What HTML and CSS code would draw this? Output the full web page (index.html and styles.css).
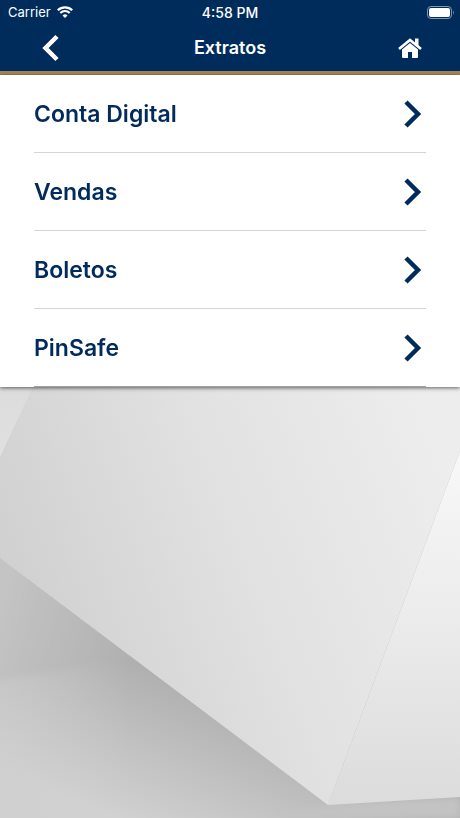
FILE: index.html
```html
<!DOCTYPE html>
<html lang="pt-BR">
<head>
    <meta charset="UTF-8">
    <meta name="viewport" content="width=device-width, initial-scale=1.0">
    <title>Extratos</title>
    <link rel="stylesheet" href="styles.css">
</head>
<body>
    <svg class="backdrop" viewBox="0 0 460 818" preserveAspectRatio="xMidYMax slice" aria-hidden="true">
        <defs>
            <linearGradient id="floor" gradientUnits="userSpaceOnUse" x1="170" y1="670" x2="110" y2="815">
                <stop offset="0" stop-color="#aeaeae"/>
                <stop offset="0.5" stop-color="#c0c0c0"/>
                <stop offset="1" stop-color="#d1d1d1"/>
            </linearGradient>
            <linearGradient id="floor-light" gradientUnits="userSpaceOnUse" x1="0" y1="0" x2="130" y2="0">
                <stop offset="0" stop-color="#cfcfcf" stop-opacity="0.5"/>
                <stop offset="1" stop-color="#cfcfcf" stop-opacity="0"/>
            </linearGradient>
            <linearGradient id="wall" gradientUnits="userSpaceOnUse" x1="0" y1="600" x2="130" y2="640">
                <stop offset="0" stop-color="#c4c4c4"/>
                <stop offset="1" stop-color="#b1b1b1"/>
            </linearGradient>
            <linearGradient id="front" gradientUnits="userSpaceOnUse" x1="0" y1="560" x2="420" y2="400">
                <stop offset="0" stop-color="#d0d0d0"/>
                <stop offset="0.5" stop-color="#e1e1e1"/>
                <stop offset="1" stop-color="#ededed"/>
            </linearGradient>
            <linearGradient id="side" gradientUnits="userSpaceOnUse" x1="0" y1="450" x2="0" y2="800">
                <stop offset="0" stop-color="#f8f8f8"/>
                <stop offset="0.5" stop-color="#ebebeb"/>
                <stop offset="1" stop-color="#dcdcdc"/>
            </linearGradient>
            <linearGradient id="corner" gradientUnits="userSpaceOnUse" x1="0" y1="380" x2="0" y2="457">
                <stop offset="0" stop-color="#dcdcdc"/>
                <stop offset="1" stop-color="#e0e0e0"/>
            </linearGradient>
            <filter id="soft" x="-20%" y="-20%" width="140%" height="140%">
                <feGaussianBlur stdDeviation="3"/>
            </filter>
        </defs>
        <rect width="460" height="818" fill="url(#floor)"/>
        <rect y="540" width="180" height="278" fill="url(#floor-light)"/>
        <polygon points="-20,530 150,640 150,652 60,670 -20,684" fill="url(#wall)" filter="url(#soft)"/>
        <polygon points="328,805 460,797 460,818 280,818" fill="#c3c3c3" filter="url(#soft)"/>
        <polygon points="0,0 460,0 460,451 328,805 0,558" fill="url(#front)"/>
        <polygon points="460,451 460,797 328,805" fill="url(#side)"/>
        <polygon points="0,380 36,380 0,457" fill="url(#corner)"/>
    </svg>

    <header>
        <div class="status-bar">
            <div class="carrier">
                <span>Carrier</span>
                <svg class="wifi" viewBox="0 0 16 12" aria-hidden="true">
                    <path d="M0.8 4.3 A10.2 10.2 0 0 1 15.2 4.3" fill="none" stroke="#fff" stroke-width="2.3"/>
                    <path d="M3.3 7 A6.6 6.6 0 0 1 12.7 7" fill="none" stroke="#fff" stroke-width="2.1"/>
                    <path d="M8 12 L5.5 9.4 A3.6 3.6 0 0 1 10.5 9.4 Z" fill="#fff"/>
                </svg>
            </div>
            <time datetime="16:58">4:58 PM</time>
            <div class="battery">
                <svg viewBox="0 0 27 13" aria-hidden="true">
                    <rect x="0.5" y="0.5" width="24" height="12" rx="3.5" fill="none" stroke="#8296ae"/>
                    <rect x="2" y="2" width="21" height="9" rx="2" fill="#fff"/>
                    <path d="M26 4.5 Q27.5 6.5 26 8.5 Z" fill="#8296ae"/>
                </svg>
            </div>
        </div>
        <nav>
            <a class="back" href="#" aria-label="Voltar">
                <svg viewBox="0 0 18 28" aria-hidden="true">
                    <path d="M15 2.5 L3.5 14 L15 25.5" fill="none" stroke="#fff" stroke-width="4.5"/>
                </svg>
            </a>
            <h1>Extratos</h1>
            <a class="home" href="#" aria-label="Início">
                <svg viewBox="0 0 24 20" aria-hidden="true">
                    <path d="M1 11 L12 1.9 L23 11" fill="none" stroke="#fff" stroke-width="2.6"/>
                    <path d="M17 0.5 H20.5 V9 L17 6 Z" fill="#fff"/>
                    <path d="M12 5 L20 11.6 V19 Q20 20 19 20 H14 V14 H10 V20 H5 Q4 20 4 19 V11.6 Z" fill="#fff"/>
                </svg>
            </a>
        </nav>
    </header>

    <main>
        <ul class="menu">
            <li>
                <a href="#">
                    <span>Conta Digital</span>
                    <svg class="chevron" viewBox="0 0 18 28" aria-hidden="true"><path d="M2 2 L14 14 L2 26"/></svg>
                </a>
            </li>
            <li>
                <a href="#">
                    <span>Vendas</span>
                    <svg class="chevron" viewBox="0 0 18 28" aria-hidden="true"><path d="M2 2 L14 14 L2 26"/></svg>
                </a>
            </li>
            <li>
                <a href="#">
                    <span>Boletos</span>
                    <svg class="chevron" viewBox="0 0 18 28" aria-hidden="true"><path d="M2 2 L14 14 L2 26"/></svg>
                </a>
            </li>
            <li>
                <a href="#">
                    <span>PinSafe</span>
                    <svg class="chevron" viewBox="0 0 18 28" aria-hidden="true"><path d="M2 2 L14 14 L2 26"/></svg>
                </a>
            </li>
        </ul>
    </main>
</body>
</html>
```
FILE: styles.css
```css
* {
    box-sizing: border-box;
}

body {
    font-family: Inter, 'Liberation Sans', sans-serif;
    margin: 0;
    min-height: 100vh;
    background-color: #d8d8d8;
    color: #002b5c;
}

.backdrop {
    position: fixed;
    inset: 0;
    width: 100%;
    height: 100%;
    z-index: -1;
}

header {
    background-color: #002c5b;
    border-bottom: 4px solid #a98354;
    color: white;
}

.status-bar {
    display: grid;
    grid-template-columns: 1fr auto 1fr;
    align-items: center;
    height: 24px;
    padding: 0 6px;
    font-size: 13px;
}

.status-bar time {
    font-size: 14px;
    font-weight: 500;
}

.carrier {
    display: flex;
    align-items: center;
    gap: 6px;
    padding-left: 2px;
}

.wifi {
    width: 16px;
    height: 12px;
}

.battery {
    display: flex;
    justify-content: flex-end;
}

.battery svg {
    width: 27px;
    height: 13px;
}

nav {
    display: grid;
    grid-template-columns: 1fr auto 1fr;
    align-items: center;
    height: 47px;
    padding: 0 38px;
}

nav a {
    display: flex;
}

nav h1 {
    margin: 0;
    font-size: 18px;
    font-weight: 600;
}

.back {
    padding-left: 4px;
}

.back svg {
    width: 18px;
    height: 28px;
}

.home {
    justify-self: end;
}

.home svg {
    width: 24px;
    height: 20px;
}

.menu {
    list-style: none;
    margin: 0;
    padding: 0 34px;
    background-color: white;
    box-shadow: 0 1px 4px rgba(0, 0, 0, 0.6);
}

.menu li {
    border-bottom: 1px solid #d4d4d4;
}

.menu li:last-child {
    border-bottom-color: #a0a0a0;
}

.menu a {
    display: flex;
    justify-content: space-between;
    align-items: center;
    padding: 24px 4px 23px 0;
    color: inherit;
    font-size: 23px;
    font-weight: 600;
    line-height: 30px;
    text-decoration: none;
}

.chevron {
    width: 18px;
    height: 28px;
    fill: none;
    stroke: #002b5c;
    stroke-width: 4.5;
}
```
